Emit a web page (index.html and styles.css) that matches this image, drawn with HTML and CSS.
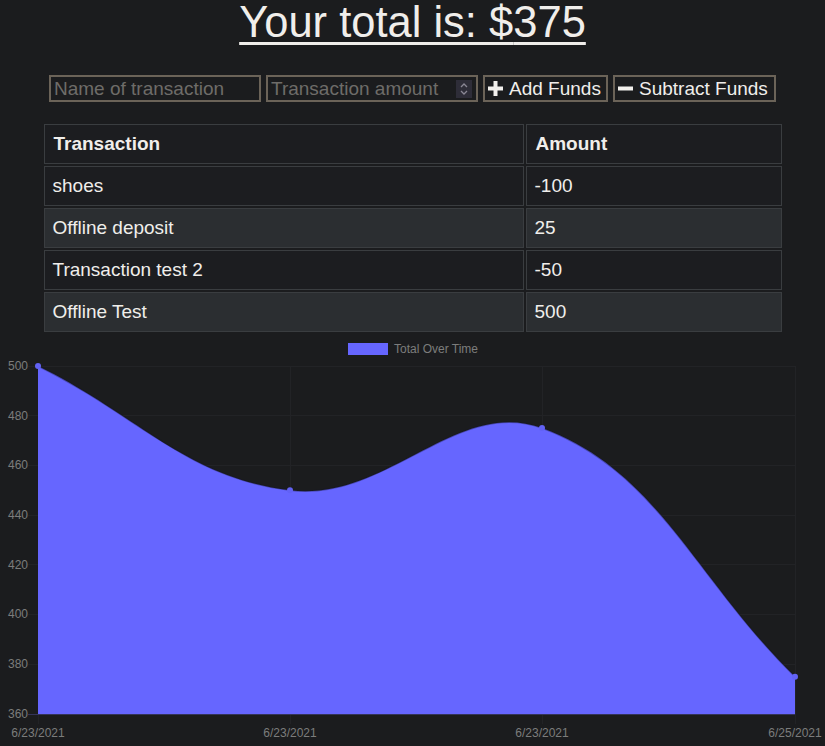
FILE: index.html
```html
<!DOCTYPE html>
<html lang="en">
<head>
<meta charset="utf-8">
<title>Budget Tracker</title>
<link rel="stylesheet" href="styles.css">
</head>
<body>
<h1 class="total">Your total is: $<span class="total-value">375</span></h1>

<form class="tx-form">
  <input class="field field-name" type="text" placeholder="Name of transaction">
  <label class="field field-amount">
    <input class="amount-input" type="text" placeholder="Transaction amount">
    <span class="spinner">
      <svg width="8" height="14" viewBox="0 0 8 14"><path d="M1 5 L4 2 L7 5 M1 9 L4 12 L7 9" fill="none" stroke="#8a8794" stroke-width="1.3"/></svg>
    </span>
  </label>
  <button class="btn btn-add" type="button">
    <svg class="btn-icon" width="15" height="15" viewBox="0 0 15 15"><rect x="5.5" y="0" width="4" height="15" fill="#f2f0ed"/><rect x="0" y="5.5" width="15" height="4" fill="#f2f0ed"/></svg>
    <span>Add Funds</span>
  </button>
  <button class="btn btn-sub" type="button">
    <svg class="btn-icon" width="15" height="15" viewBox="0 0 15 15"><rect x="0" y="5.5" width="15" height="4" fill="#f2f0ed"/></svg>
    <span>Subtract Funds</span>
  </button>
</form>

<table class="tx-table">
  <thead>
    <tr><th class="col-name">Transaction</th><th class="col-amount">Amount</th></tr>
  </thead>
  <tbody>
    <tr><td>shoes</td><td>-100</td></tr>
    <tr><td>Offline deposit</td><td>25</td></tr>
    <tr><td>Transaction test 2</td><td>-50</td></tr>
    <tr><td>Offline Test</td><td>500</td></tr>
  </tbody>
</table>

<svg class="chart" width="825" height="412" viewBox="0 334 825 412">
  <g class="legend">
    <rect x="348" y="343" width="40" height="12" fill="#6666ff"/>
    <text x="394" y="353" class="legend-text">Total Over Time</text>
  </g>
  <g class="grid" stroke="#222326" stroke-width="1">
    <line x1="28" y1="366.5" x2="795" y2="366.5"/>
    <line x1="28" y1="415.5" x2="795" y2="415.5"/>
    <line x1="28" y1="465.5" x2="795" y2="465.5"/>
    <line x1="28" y1="515.5" x2="795" y2="515.5"/>
    <line x1="28" y1="564.5" x2="795" y2="564.5"/>
    <line x1="28" y1="614.5" x2="795" y2="614.5"/>
    <line x1="28" y1="664.5" x2="795" y2="664.5"/>
    <line x1="38.5" y1="366" x2="38.5" y2="724"/>
    <line x1="290.5" y1="366" x2="290.5" y2="724"/>
    <line x1="542.5" y1="366" x2="542.5" y2="724"/>
    <line x1="795.5" y1="366" x2="795.5" y2="724"/>
  </g>
  <path d="M38,366 C138.8,415.7 185.2,477.4 290,490.3 C386.8,502.2 456.7,396.6 542,428.1 C658.7,471.2 693.8,577.3 795,676.7 L795,714 L38,714 Z" fill="#6666ff"/>
  <path d="M38,366 C138.8,415.7 185.2,477.4 290,490.3 C386.8,502.2 456.7,396.6 542,428.1 C658.7,471.2 693.8,577.3 795,676.7" fill="none" stroke="rgba(20,20,40,0.35)" stroke-width="1.5"/>
  <line x1="28" y1="714.5" x2="795" y2="714.5" stroke="#34345a" stroke-width="1"/>
  <g class="points" fill="#6262f5">
    <circle cx="38" cy="366" r="3"/>
    <circle cx="290" cy="490.3" r="3"/>
    <circle cx="542" cy="428.1" r="3"/>
    <circle cx="795" cy="676.7" r="3"/>
  </g>
  <g class="ylabels">
    <text x="28" y="370">500</text>
    <text x="28" y="420">480</text>
    <text x="28" y="469">460</text>
    <text x="28" y="519">440</text>
    <text x="28" y="569">420</text>
    <text x="28" y="618">400</text>
    <text x="28" y="668">380</text>
    <text x="28" y="718">360</text>
  </g>
  <g class="xlabels">
    <text x="38" y="737">6/23/2021</text>
    <text x="290" y="737">6/23/2021</text>
    <text x="542" y="737">6/23/2021</text>
    <text x="795" y="737">6/25/2021</text>
  </g>
</svg>
</body>
</html>
```

FILE: styles.css
```css
html, body {
  margin: 0;
  padding: 0;
  background: #1b1c1e;
  color: #e8e6e3;
  font-family: "Liberation Sans", Arial, sans-serif;
  overflow: hidden;
}

.total {
  margin: -2px 0 0;
  font-size: 43.5px;
  font-weight: normal;
  line-height: 48px;
  text-align: center;
  text-decoration: underline;
  text-decoration-thickness: 3px;
  text-underline-offset: 5px;
  color: #f0eeeb;
}

.tx-form {
  display: flex;
  justify-content: center;
  gap: 5px;
  margin-top: 29px;
}

.field {
  box-sizing: border-box;
  width: 212px;
  height: 27px;
  border: 2px solid #6b6358;
  background: #1b1c1e;
  color: #e8e6e3;
  font-family: "Liberation Sans", Arial, sans-serif;
  font-size: 19px;
  padding: 0 3px;
  margin: 0;
  outline: none;
}

.field::placeholder,
.amount-input::placeholder {
  color: #6e6c69;
}

.field-amount {
  display: flex;
  align-items: center;
  padding: 0 4px 0 3px;
}

.amount-input {
  flex: 1;
  min-width: 0;
  border: 0;
  padding: 0;
  background: transparent;
  color: #e8e6e3;
  font-family: "Liberation Sans", Arial, sans-serif;
  font-size: 19px;
  outline: none;
}

.spinner {
  display: flex;
  align-items: center;
  justify-content: center;
  width: 16px;
  height: 18px;
  background: #2e2d38;
}

.btn {
  box-sizing: border-box;
  height: 27px;
  display: flex;
  align-items: center;
  gap: 6px;
  margin: 0;
  padding: 0 3px;
  border: 2px solid #6b6358;
  background: #1b1c1e;
  color: #f0eeeb;
  font-family: "Liberation Sans", Arial, sans-serif;
  font-size: 19px;
}

.btn-add {
  width: 125px;
}

.btn-sub {
  width: 163px;
}

.btn-icon {
  display: block;
  flex: none;
}

.tx-table {
  width: 742px;
  margin: 20px auto 0;
  border-collapse: separate;
  border-spacing: 2px;
  font-size: 19px;
  table-layout: fixed;
}

.col-name {
  width: 461px;
}

.tx-table th,
.tx-table td {
  border: 1px solid #3a3d40;
  padding: 8px 8px;
  height: 22px;
  line-height: 22px;
  text-align: left;
  color: #f0eeeb;
}

.tx-table th {
  font-weight: bold;
  padding-left: 9px;
  background: #1c1d20;
}

.tx-table tbody tr:nth-child(odd) td {
  background: #1c1d20;
}

.tx-table tbody tr:nth-child(even) td {
  background: #2b2e31;
}

.chart {
  display: block;
  margin-top: 0;
}

.legend-text {
  font-family: "Liberation Sans", Arial, sans-serif;
  font-size: 12px;
  fill: #7c7c7c;
}

.ylabels text {
  font-family: "Liberation Sans", Arial, sans-serif;
  font-size: 12px;
  fill: #7c7c7c;
  text-anchor: end;
}

.xlabels text {
  font-family: "Liberation Sans", Arial, sans-serif;
  font-size: 12px;
  fill: #7c7c7c;
  text-anchor: middle;
}
```
